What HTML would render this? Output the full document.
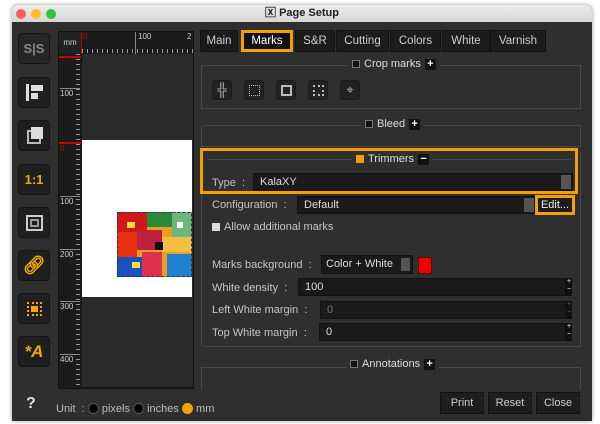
<!DOCTYPE html>
<html><head><style>
*{box-sizing:border-box;margin:0;padding:0}
body{width:600px;height:424px;background:#fff;position:relative;overflow:hidden;font-family:"Liberation Sans",sans-serif;font-size:11px;color:#ddd}
.a{position:absolute}
.win{left:12px;top:5px;width:580px;height:416px;background:#2f2f2f;border-radius:5px 5px 0 0;overflow:hidden;box-shadow:0 0 4px rgba(0,0,0,.4)}
.title{left:0;top:0;width:580px;height:17px;background:linear-gradient(#ececec,#d6d6d6);color:#222;font-weight:bold;font-size:11px;text-align:center;line-height:17px}
.dot{width:10px;height:10px;border-radius:50%;top:4px}
.sb{width:32px;height:31px;background:#1f1f1f;border-radius:4px;border:1px solid #141414;left:6px}
.tab{top:25px;height:22px;background:#1c1c1c;border:1px solid #111;color:#ccc;font-size:11.5px;text-align:center;line-height:20px}
.grp{border:1px solid #4a4a4a;left:189px;width:380px}
.lbl{background:#2f2f2f;padding:0 4px;font-size:11px;color:#ddd}
.cb{display:inline-block;width:8px;height:8px;background:#111;border:1px solid #777;vertical-align:-1px;margin-right:4px}
.pl{display:inline-block;width:11px;height:11px;background:#111;color:#fff;font-weight:bold;text-align:center;line-height:11px;font-size:11px;margin-left:4px;vertical-align:0}
.ib{width:20px;height:20px;background:#222;border:1px solid #1a1a1a;border-radius:3px;top:75px}
.fld{background:#1a1a1a;border:1px solid #111;color:#ddd;padding-left:6px;line-height:16px;height:18px}
.t{font-size:11px;color:#c4c4c4}
.btn{top:387px;height:22px;background:#1e1e1e;border:1px solid #111;color:#ccc;text-align:center;line-height:20px;font-size:11px}
.spin{width:6px;height:18px;background:#111;color:#fff;font-size:7px;line-height:8px;text-align:center}
.r{display:inline-block;width:11px;height:11px;border-radius:50%;background:#000;border:1px solid #555;vertical-align:-2px}
</style></head><body>
<div class="a win">
 <div class="a title">🅇 Page Setup</div>
 <div class="a dot" style="left:4px;background:#fc5f57"></div>
 <div class="a dot" style="left:19px;background:#fdbc2e"></div>
 <div class="a dot" style="left:34px;background:#2ac840"></div>

 <div class="a sb" style="top:28px;background:#262626;color:#888;font-weight:bold;font-size:13px;text-align:center;line-height:29px">S|S</div>
 <div class="a sb" style="top:72px"><div class="a" style="left:7px;top:6px;width:3px;height:17px;background:#ddd"></div><div class="a" style="left:12px;top:7px;width:12px;height:6px;background:#ddd"></div><div class="a" style="left:12px;top:15px;width:7px;height:6px;background:#ddd"></div></div>
 <div class="a sb" style="top:115px"><div class="a" style="left:8px;top:9px;width:14px;height:14px;border:2px solid #bbb"></div><div class="a" style="left:12px;top:6px;width:12px;height:12px;background:#ddd"></div></div>
 <div class="a sb" style="top:159px;color:#f5a800;font-weight:bold;font-size:13px;text-align:center;line-height:29px">1:1</div>
 <div class="a sb" style="top:202px"><div class="a" style="left:7px;top:7px;width:17px;height:16px;border:2px solid #ccc"></div><div class="a" style="left:11px;top:11px;width:9px;height:8px;border:2px solid #999"></div></div>
 <div class="a sb" style="top:245px;color:#f5a800;font-size:18px;text-align:center;line-height:29px;font-weight:bold">🔗︎</div>
 <div class="a sb" style="top:288px"><div class="a" style="left:8px;top:8px;width:15px;height:14px;border:2px dotted #f5a800"></div><div class="a" style="left:12px;top:12px;width:7px;height:6px;background:#f5a800"></div></div>
 <div class="a sb" style="top:331px;color:#f5a800;font-weight:bold;font-style:italic;font-size:17px;text-align:center;line-height:29px">*A</div>

 <div class="a" style="left:46px;top:26px;width:136px;height:358px;background:#151515;border:1px solid #111"></div>
 <div class="a" style="left:47px;top:27px;width:22px;height:22px;background:#222;color:#ccc;font-size:8px;line-height:22px;text-align:center">mm</div>
 <div class="a" style="left:69px;top:27px;width:112px;height:22px;background:#1b1b1b;border-left:1px solid #c00;background-image:repeating-linear-gradient(90deg,#999 0 1px,transparent 1px 5px);background-size:100% 4px;background-repeat:no-repeat;background-position:0 17px"></div>
 <div class="a" style="left:71px;top:27px;font-size:8px;color:#c00">0</div>
 <div class="a" style="left:123px;top:27px;font-size:8px;color:#ccc;border-left:1px solid #888;padding-left:2px;height:22px">100</div>
 <div class="a" style="left:175px;top:27px;font-size:8px;color:#ccc">2</div>
 <div class="a" style="left:47px;top:49px;width:22px;height:334px;background:#1b1b1b;background-image:repeating-linear-gradient(180deg,#999 0 1px,transparent 1px 5px);background-size:4px 100%;background-repeat:no-repeat;background-position:17px 0"></div>
 <div class="a" style="left:47px;top:51px;width:22px;height:2px;background:#c00"></div>
 <div class="a" style="left:48px;top:83px;font-size:8px;color:#ccc;border-top:1px solid #888;width:20px">100</div>
 <div class="a" style="left:47px;top:137px;width:22px;height:2px;background:#c00"></div>
 <div class="a" style="left:48px;top:139px;font-size:8px;color:#c00">0</div>
 <div class="a" style="left:48px;top:191px;font-size:8px;color:#ccc;border-top:1px solid #888;width:20px">100</div>
 <div class="a" style="left:48px;top:244px;font-size:8px;color:#ccc;border-top:1px solid #888;width:20px">200</div>
 <div class="a" style="left:48px;top:296px;font-size:8px;color:#ccc;border-top:1px solid #888;width:20px">300</div>
 <div class="a" style="left:48px;top:349px;font-size:8px;color:#ccc;border-top:1px solid #888;width:20px">400</div>
 <div class="a" style="left:70px;top:49px;width:111px;height:333px;background:#2a2a2a"></div>
 <div class="a" style="left:70px;top:135px;width:110px;height:157px;background:#fff"></div>
 <svg class="a" style="left:105px;top:207px" width="75" height="65">
  <rect width="75" height="65" fill="#e8a020"/>
  <rect x="0" y="0" width="30" height="20" fill="#d01818"/><rect x="30" y="0" width="25" height="15" fill="#2a8a3a"/><rect x="55" y="0" width="20" height="25" fill="#6cb87a"/>
  <rect x="0" y="20" width="20" height="25" fill="#e83010"/><rect x="20" y="18" width="25" height="20" fill="#c02040"/><rect x="45" y="25" width="30" height="15" fill="#f0c040"/>
  <rect x="0" y="45" width="25" height="20" fill="#1a50c0"/><rect x="25" y="40" width="20" height="25" fill="#e03050"/><rect x="50" y="42" width="25" height="23" fill="#2080d0"/>
  <rect x="10" y="10" width="8" height="6" fill="#f8e030"/><rect x="38" y="30" width="8" height="8" fill="#101010"/><rect x="60" y="10" width="6" height="6" fill="#fff"/><rect x="15" y="50" width="8" height="6" fill="#f8e030"/>
  <rect x="0.5" y="0.5" width="74" height="64" fill="none" stroke="#333" stroke-dasharray="3 2"/>
 </svg>

 <div class="a tab" style="left:188px;width:38px">Main</div>
 <div class="a tab" style="left:229px;width:52px;border:3px solid #f5a000;line-height:16px;color:#fff;background:#111">Marks</div>
 <div class="a tab" style="left:283px;width:40px">S&amp;R</div>
 <div class="a tab" style="left:324px;width:53px">Cutting</div>
 <div class="a tab" style="left:378px;width:51px">Colors</div>
 <div class="a tab" style="left:430px;width:48px">White</div>
 <div class="a tab" style="left:478px;width:56px">Varnish</div>

 <div class="a grp" style="top:60px;height:44px"></div>
 <div class="a lbl" style="left:336px;top:53px"><span class="cb"></span>Crop marks<span class="pl">+</span></div>
 <div class="a ib" style="left:200px;color:#bbb;text-align:center;font-size:13px;line-height:18px">╬</div>
 <div class="a ib" style="left:232px"><div class="a" style="left:4px;top:4px;width:11px;height:11px;border:1px dotted #bbb"></div></div>
 <div class="a ib" style="left:264px"><div class="a" style="left:4px;top:4px;width:11px;height:11px;border:2px dashed #bbb"></div></div>
 <div class="a ib" style="left:296px"><div class="a" style="left:4px;top:4px;width:11px;height:11px;border:2px dotted #bbb"></div></div>
 <div class="a ib" style="left:328px;color:#bbb;text-align:center;font-size:13px;line-height:18px">⌖</div>

 <div class="a grp" style="top:120px;height:22px"></div>
 <div class="a lbl" style="left:349px;top:113px"><span class="cb"></span>Bleed<span class="pl">+</span></div>

 <div class="a grp" style="top:148px;height:194px;border-top:none"></div>
 <div class="a" style="left:188px;top:143px;width:378px;height:46px;border:3px solid #f5a000"></div>
 <div class="a" style="left:195px;top:154px;width:364px;height:1px;background:#4a4a4a"></div>
 <div class="a lbl" style="left:340px;top:148px"><span class="cb" style="background:#f5a000;border-color:#f5a000"></span>Trimmers<span class="pl">−</span></div>
 <div class="a t" style="left:200px;top:172px">Type &nbsp;:</div>
 <div class="a fld" style="left:241px;top:168px;width:320px">KalaXY</div>
 <div class="a" style="left:549px;top:170px;width:10px;height:14px;background:#555"></div>
 <div class="a t" style="left:200px;top:194px">Configuration &nbsp;:</div>
 <div class="a fld" style="left:285px;top:191px;width:238px">Default</div>
 <div class="a" style="left:512px;top:193px;width:10px;height:14px;background:#555"></div>
 <div class="a" style="left:523px;top:190px;width:40px;height:20px;border:3px solid #f5a000;background:#1c1c1c;color:#eee;text-align:center;line-height:14px">Edit...</div>
 <div class="a t" style="left:200px;top:216px"><span class="cb" style="background:#ddd;border-color:#ddd"></span>Allow additional marks</div>
 <div class="a t" style="left:200px;top:254px">Marks background &nbsp;:</div>
 <div class="a fld" style="left:309px;top:250px;width:92px;height:19px;padding-left:4px">Color + White</div>
 <div class="a" style="left:389px;top:253px;width:9px;height:13px;background:#555"></div>
 <div class="a" style="left:406px;top:252px;width:14px;height:17px;background:#e00;border:1px solid #600"></div>
 <div class="a t" style="left:200px;top:277px">White density &nbsp;:</div>
 <div class="a fld" style="left:286px;top:273px;width:268px">100</div>
 <div class="a spin" style="left:554px;top:273px">+<br>−</div>
 <div class="a t" style="left:200px;top:299px">Left White margin &nbsp;:</div>
 <div class="a fld" style="left:308px;top:296px;width:246px;color:#777">0</div>
 <div class="a spin" style="left:554px;top:296px;color:#666">+<br>−</div>
 <div class="a t" style="left:200px;top:322px">Top White margin &nbsp;:</div>
 <div class="a fld" style="left:307px;top:318px;width:247px">0</div>
 <div class="a spin" style="left:554px;top:318px">+<br>−</div>

 <div class="a grp" style="top:362px;height:22px;border-bottom:none"></div>
 <div class="a lbl" style="left:334px;top:353px"><span class="cb"></span>Annotations<span class="pl">+</span></div>

 <div class="a" style="left:14px;top:390px;font-size:16px;font-weight:bold;color:#ddd">?</div>
 <div class="a t" style="left:44px;top:398px;color:#bbb">Unit &nbsp;: <span class="r"></span> pixels <span class="r"></span> inches <span class="r" style="background:#f5a000;border-color:#f5a000"></span> mm</div>
 <div class="a btn" style="left:428px;width:44px">Print</div>
 <div class="a btn" style="left:476px;width:44px">Reset</div>
 <div class="a btn" style="left:524px;width:44px">Close</div>
</div>
</body></html>
